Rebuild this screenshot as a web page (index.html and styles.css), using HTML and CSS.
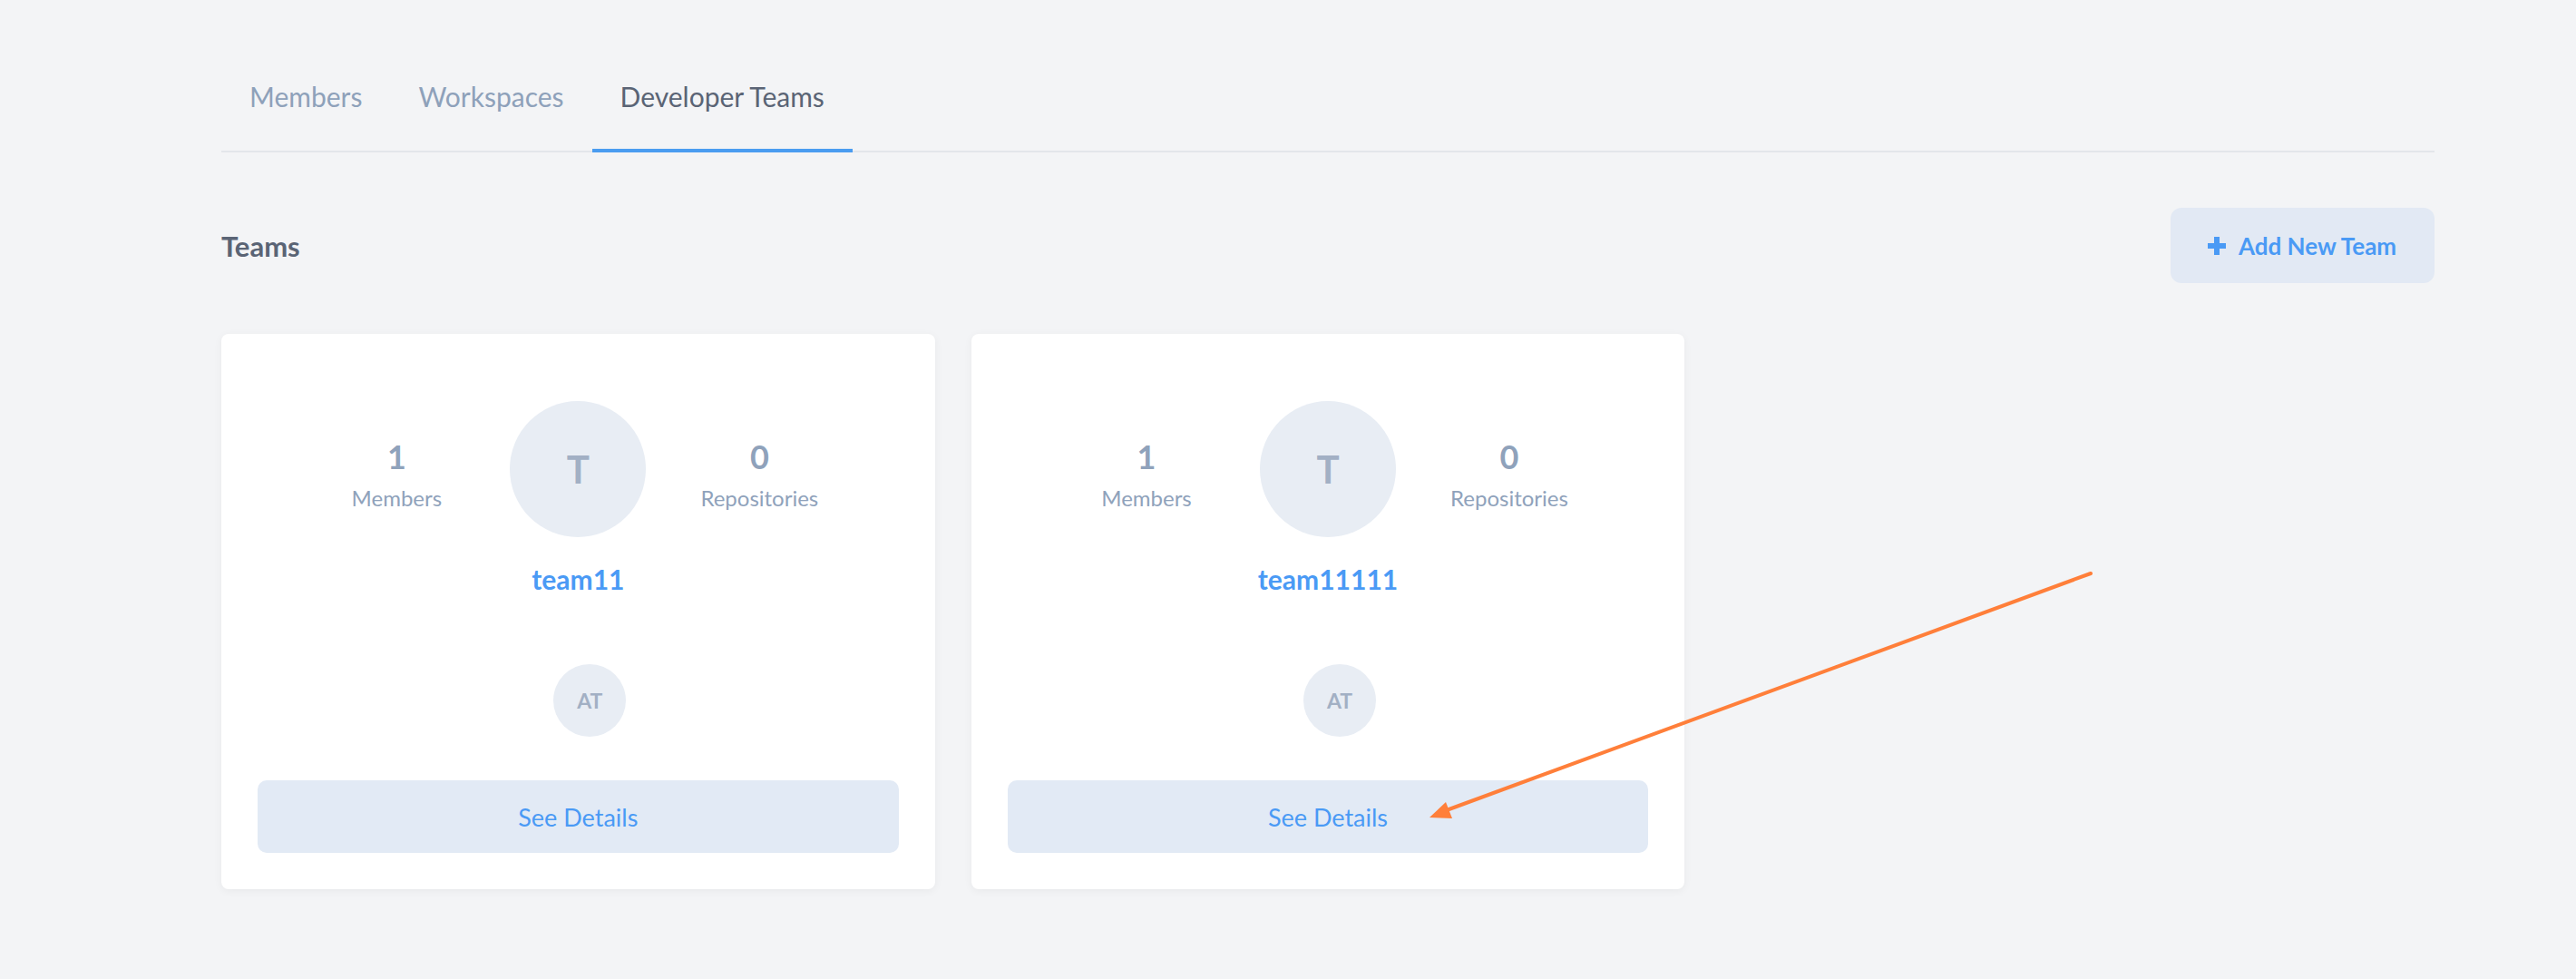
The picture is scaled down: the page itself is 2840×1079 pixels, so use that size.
FILE: index.html
```html
<!DOCTYPE html>
<html lang="en">
<head>
<meta charset="utf-8">
<title>Developer Teams</title>
<link rel="stylesheet" href="styles.css">
</head>
<body>
<div class="page">
  <nav class="tabs">
    <a class="tab">Members</a>
    <a class="tab">Workspaces</a>
    <a class="tab active">Developer Teams</a>
  </nav>

  <div class="header-row">
    <h2 class="heading">Teams</h2>
    <button class="add-btn">
      <svg class="plus" viewBox="0 0 22 22" width="22" height="22"><path d="M11 1v20M1 11h20" stroke="#4a9af5" stroke-width="6"/></svg>
      <span>Add New Team</span>
    </button>
  </div>

  <div class="cards">
    <div class="card">
      <div class="stats">
        <div class="stat"><div class="num">1</div><div class="label">Members</div></div>
        <div class="avatar-lg">T</div>
        <div class="stat"><div class="num">0</div><div class="label">Repositories</div></div>
      </div>
      <div class="team-name">team11</div>
      <div class="members"><div class="avatar-sm">AT</div></div>
      <button class="details-btn">See Details</button>
    </div>
    <div class="card">
      <div class="stats">
        <div class="stat"><div class="num">1</div><div class="label">Members</div></div>
        <div class="avatar-lg">T</div>
        <div class="stat"><div class="num">0</div><div class="label">Repositories</div></div>
      </div>
      <div class="team-name">team11111</div>
      <div class="members"><div class="avatar-sm">AT</div></div>
      <button class="details-btn">See Details</button>
    </div>
  </div>
</div>
<svg class="annotation" width="2840" height="1079" viewBox="0 0 2840 1079">
  <line x1="2305" y1="632" x2="1592" y2="894" stroke="#ff7f3a" stroke-width="4" stroke-linecap="round"/>
  <polygon points="1576,901 1594,884 1601,902" fill="#ff7f3a"/>
</svg>
</body>
</html>
```

FILE: styles.css
```css
* { box-sizing: border-box; }
html, body { margin: 0; padding: 0; }
body {
  background: #f3f4f6;
  font-family: Lato, "Noto Sans", "Liberation Sans", sans-serif;
  width: 2840px;
  height: 1079px;
  overflow: hidden;
  position: relative;
}
.page {
  width: 2440px;
  margin-left: 244px;
  padding-top: 82px;
}
.tabs {
  display: flex;
  border-bottom: 2px solid #e3e6ea;
}
.tab {
  display: block;
  padding: 0 31px 34px;
  font-size: 30px;
  line-height: 48px;
  color: #8ea1ba;
  border-bottom: 4px solid transparent;
  margin-bottom: -2px;
}
.tab.active {
  color: #5a6475;
  border-bottom-color: #4a9cf0;
}
.header-row {
  display: flex;
  align-items: center;
  justify-content: space-between;
  margin-top: 61px;
}
.heading {
  margin: 0;
  font-size: 31px;
  font-weight: 700;
  color: #5a6475;
}
.add-btn {
  display: flex;
  align-items: center;
  gap: 13px;
  height: 83px;
  width: 291px;
  padding: 0 40px;
  border: none;
  border-radius: 12px;
  background: #e2e9f4;
  color: #4a9af5;
  font-family: inherit;
  font-size: 26px;
  font-weight: 700;
}
.plus { flex: none; }
.cards {
  display: grid;
  grid-template-columns: repeat(3, 1fr);
  gap: 40px;
  margin-top: 56px;
}
.card {
  background: #fff;
  border-radius: 8px;
  box-shadow: 0 2px 10px rgba(0, 0, 0, 0.05);
  padding: 74px 40px 40px;
  display: flex;
  flex-direction: column;
  align-items: center;
}
.stats {
  display: flex;
  align-items: center;
  justify-content: center;
  gap: 40px;
  height: 150px;
}
.stat {
  width: 170px;
  text-align: center;
  margin-top: 12px;
}
.num {
  font-size: 36px;
  line-height: 44px;
  font-weight: 700;
  color: #8fa2bb;
}
.label {
  margin-top: 8px;
  font-size: 24px;
  line-height: 32px;
  color: #8fa2bb;
}
.avatar-lg {
  width: 150px;
  height: 150px;
  border-radius: 50%;
  background: #e8edf4;
  color: #a2b0c4;
  display: flex;
  align-items: center;
  justify-content: center;
  font-size: 42px;
  font-weight: 700;
  flex: none;
}
.team-name {
  margin-top: 28px;
  font-size: 30px;
  line-height: 36px;
  font-weight: 700;
  color: #4a9af5;
}
.members {
  margin-top: 76px;
  display: flex;
  justify-content: center;
}
.avatar-sm {
  width: 80px;
  height: 80px;
  border-radius: 50%;
  background: #e8edf4;
  color: #a2b0c4;
  display: flex;
  align-items: center;
  justify-content: center;
  font-size: 23px;
  font-weight: 700;
  margin-left: 26px;
}
.details-btn {
  margin-top: 48px;
  width: 100%;
  height: 80px;
  border: none;
  border-radius: 10px;
  background: #e2eaf5;
  color: #4a9af5;
  font-family: inherit;
  font-size: 27px;
  padding-top: 2px;
}
.annotation {
  position: absolute;
  left: 0;
  top: 0;
  pointer-events: none;
}
```
